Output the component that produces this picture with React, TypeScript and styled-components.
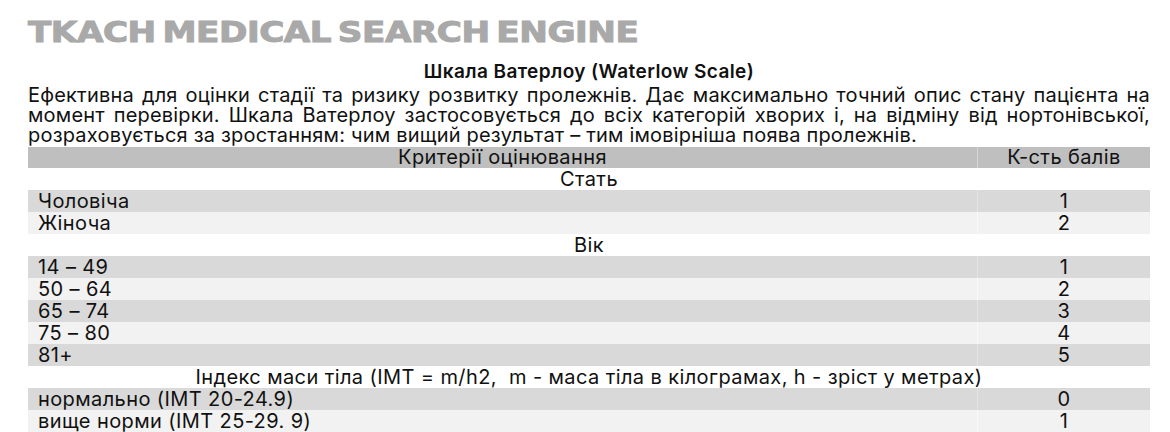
import styled, { createGlobalStyle } from 'styled-components';

const GlobalStyle = createGlobalStyle`
  body {
    margin: 0;
    background: #ffffff;
    font-family: Inter, 'Liberation Sans', Arial, sans-serif;
    color: #111111;
  }
`;

type Section = {
  title: string;
  rows: [string, string][];
};

const sections: Section[] = [
  {
    title: 'Стать',
    rows: [['Чоловіча', '1'], ['Жіноча', '2']],
  },
  {
    title: 'Вік',
    rows: [['14 – 49', '1'], ['50 – 64', '2'], ['65 – 74', '3'], ['75 – 80', '4'], ['81+', '5']],
  },
  {
    title: 'Індекс маси тіла (IMT = m/h2,  m - маса тіла в кілограмах, h - зріст у метрах)',
    rows: [['нормально (IMT 20-24.9)', '0'], ['вище норми (IMT 25-29. 9)', '1']],
  },
];

const Page = styled.div`
  padding: 16px 20px 0 28px;
  overflow: hidden;
`;

const Brand = styled.h1`
  display: inline-block;
  margin: 0 0 13px;
  font-family: 'DejaVu Sans', sans-serif;
  font-weight: bold;
  font-size: 29px;
  line-height: 32px;
  letter-spacing: -0.4px;
  word-spacing: -4px;
  color: #a9a9a9;
  -webkit-text-stroke: 1px #a9a9a9;
  transform: scaleX(1.18);
  transform-origin: left center;
`;

const ScaleTitle = styled.h2`
  margin: 0 0 2px;
  text-align: center;
  font-size: 19px;
  font-weight: 600;
  line-height: 22px;
  letter-spacing: 0.4px;
`;

const Intro = styled.p`
  margin: 0;
  font-size: 20px;
  line-height: 20px;
  letter-spacing: 0.2px;
  text-align: justify;
`;

const Table = styled.table`
  width: 100%;
  border-collapse: collapse;
  font-size: 20px;
  letter-spacing: 0.4px;
  margin-top: 2px;
`;

const HeadCell = styled.th<{ $narrow?: boolean }>`
  background: #bfbfbf;
  font-weight: normal;
  height: 21px;
  padding: 0;
  line-height: 21px;
  text-align: center;
  width: ${(p) => (p.$narrow ? '172px' : 'auto')};
  border-left: ${(p) => (p.$narrow ? '1px solid #d6d6d6' : 'none')};
`;

const SectionCell = styled.td`
  background: #ffffff;
  height: 22px;
  padding: 0;
  line-height: 22px;
  text-align: center;
  white-space: pre;
`;

const Cell = styled.td<{ $dark: boolean; $score?: boolean }>`
  background: ${(p) => (p.$dark ? '#d9d9d9' : '#f2f2f2')};
  height: 22px;
  padding: 0 0 0 ${(p) => (p.$score ? '0' : '10px')};
  line-height: 22px;
  text-align: ${(p) => (p.$score ? 'center' : 'left')};
  border-left: ${(p) => (p.$score ? `1px solid ${p.$dark ? '#e4e4e4' : '#f8f8f8'}` : 'none')};
`;

export default function App() {
  return (
    <Page>
      <GlobalStyle />
      <Brand>TKACH MEDICAL SEARCH ENGINE</Brand>
      <ScaleTitle>Шкала Ватерлоу (Waterlow Scale)</ScaleTitle>
      <Intro>
        Ефективна для оцінки стадії та ризику розвитку пролежнів. Дає максимально точний опис стану пацієнта на
        момент перевірки. Шкала Ватерлоу застосовується до всіх категорій хворих і, на відміну від нортонівської,
        розраховується за зростанням: чим вищий результат – тим імовірніша поява пролежнів.
      </Intro>
      <Table>
        <thead>
          <tr>
            <HeadCell>Критерії оцінювання</HeadCell>
            <HeadCell $narrow>К-сть балів</HeadCell>
          </tr>
        </thead>
        <tbody>
          {sections.map((section) => (
            <>
              <tr key={section.title}>
                <SectionCell colSpan={2}>{section.title}</SectionCell>
              </tr>
              {section.rows.map(([label, score], i) => (
                <tr key={label}>
                  <Cell $dark={i % 2 === 0}>{label}</Cell>
                  <Cell $dark={i % 2 === 0} $score>{score}</Cell>
                </tr>
              ))}
            </>
          ))}
        </tbody>
      </Table>
    </Page>
  );
}
